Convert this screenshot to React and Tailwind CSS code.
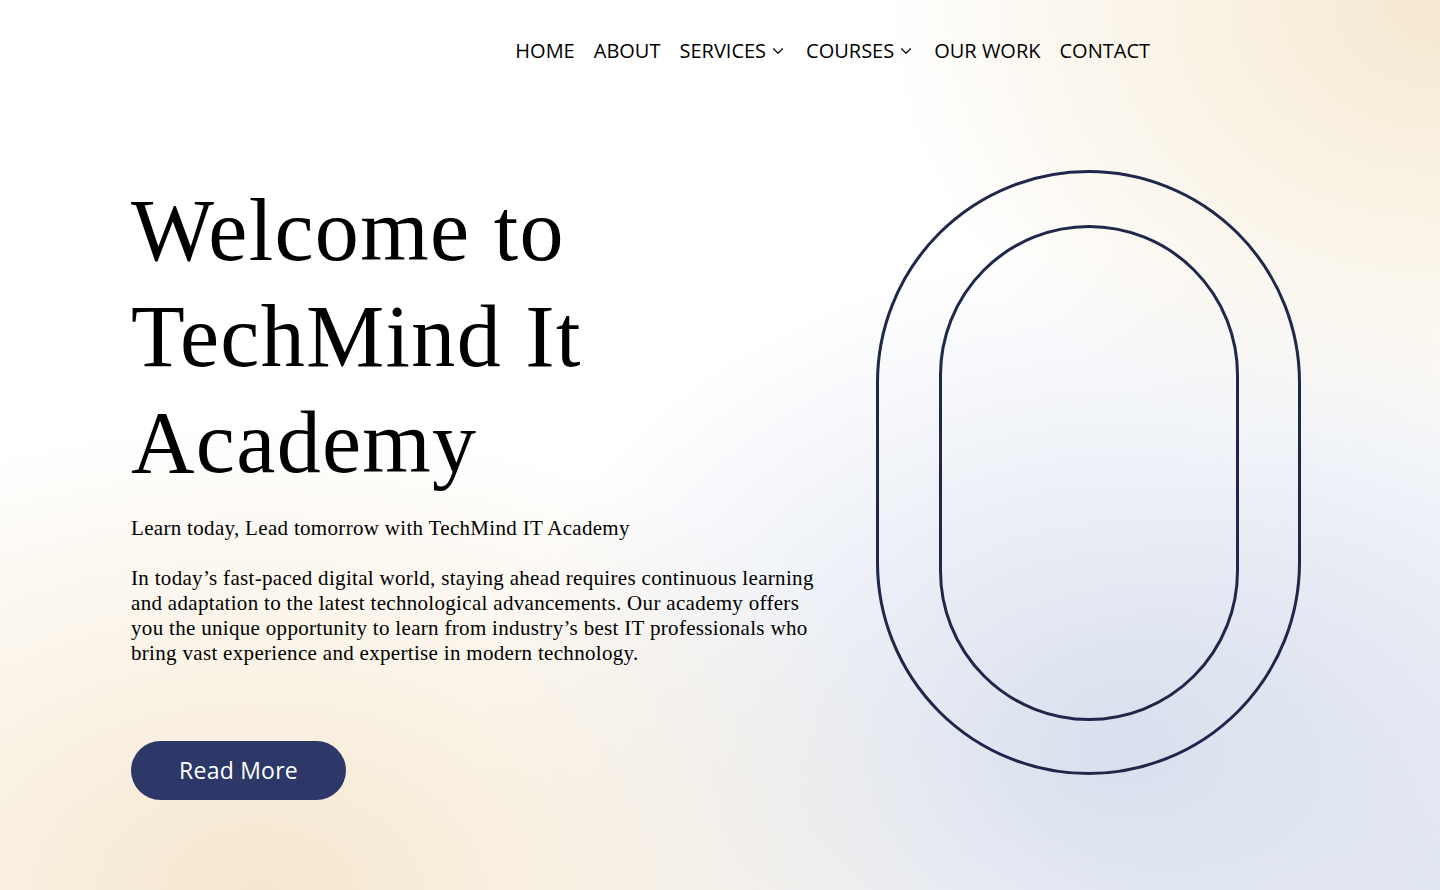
import React from "react";
import { ChevronDown } from "lucide-react";

const links = [
  { label: "HOME" },
  { label: "ABOUT" },
  { label: "SERVICES", menu: true },
  { label: "COURSES", menu: true },
  { label: "OUR WORK" },
  { label: "CONTACT" },
];

export default function App() {
  return (
    <div className="relative h-[890px] overflow-hidden bg-white bg-[radial-gradient(ellipse_560px_460px_at_100%_0%,#f5e8d0,rgba(245,232,208,0)_100%),radial-gradient(ellipse_720px_470px_at_18%_100%,#f5e7cf,rgba(245,231,207,0)_100%),radial-gradient(ellipse_640px_500px_at_78%_84%,#d8dfed,rgba(216,223,237,0)_100%),radial-gradient(ellipse_420px_520px_at_100%_100%,#e9edf6,rgba(233,237,246,0)_100%)]">
      <header className="flex justify-end pr-[290px] pt-[37px]">
        <nav className="flex items-center gap-[19px] font-['Open_Sans',sans-serif] text-[20px] text-black">
          {links.map((l) => (
            <a key={l.label} href="#" className="flex items-center gap-[3px] leading-[28px]">
              {l.label}
              {l.menu && <ChevronDown className="h-[18px] w-[18px]" strokeWidth={1.5} />}
            </a>
          ))}
        </nav>
      </header>

      <main className="flex pl-[131px] pt-[103px]">
        <div className="w-[700px] font-['Liberation_Serif',serif] text-black">
          <h1 className="pt-[10px] text-[88px] leading-[106px] tracking-[0.015em]">
            Welcome to
            <br />
            TechMind It
            <br />
            Academy
          </h1>
          <p className="mt-[20px] text-[21px] leading-[25px] tracking-[0.015em]">
            Learn today, Lead tomorrow with TechMind IT Academy
          </p>
          <p className="mt-[25px] w-[688px] text-[21px] leading-[25px] tracking-[0.015em]">
            In today’s fast-paced digital world, staying ahead requires continuous learning and
            adaptation to the latest technological advancements. Our academy offers you the unique
            opportunity to learn from industry’s best IT professionals who bring vast experience and
            expertise in modern technology.
          </p>
          <button className="mt-[75px] h-[59px] w-[215px] rounded-full bg-[#2d3868] font-['Open_Sans',sans-serif] text-[23px] font-medium tracking-[0.01em] text-white">
            Read More
          </button>
        </div>

        <div className="flex flex-1 justify-start pl-[45px] pt-[2px]">
          <div className="flex h-[605px] w-[425px] items-center justify-center rounded-full border-[3px] border-[#1f274a]">
            <div className="h-[496px] w-[300px] rounded-full border-[3px] border-[#1f274a]" />
          </div>
        </div>
      </main>
    </div>
  );
}
